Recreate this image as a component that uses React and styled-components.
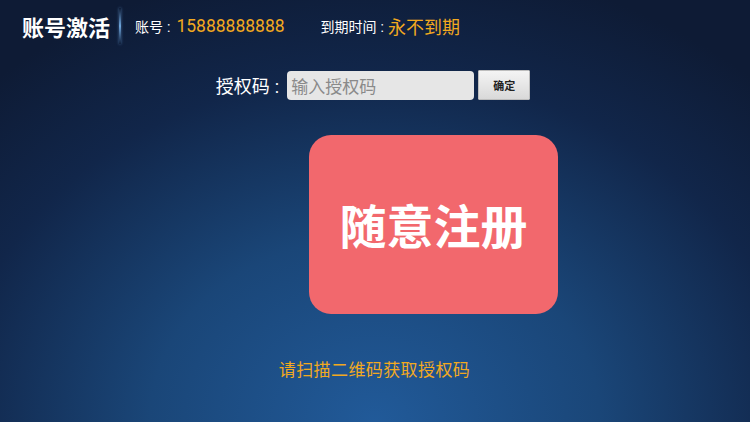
import styled, { createGlobalStyle } from "styled-components";

const GlobalStyle = createGlobalStyle`
  html, body {
    margin: 0;
    padding: 0;
    height: 100%;
  }
  body {
    font-family: Roboto, "Noto Sans CJK SC", sans-serif;
  }
  #root {
    height: 100%;
  }
`;

const ORANGE = "#f2a91f";

const Page = styled.div`
  width: 750px;
  height: 422px;
  overflow: hidden;
  display: flex;
  flex-direction: column;
  background: radial-gradient(
    ellipse 75% 110% at 50% 100%,
    #215a99 0%,
    #1a4678 40%,
    #11264a 75%,
    #0e1b35 100%
  );
  color: #fff;
`;

const Header = styled.div`
  height: 52px;
  display: flex;
  align-items: center;
  padding-left: 22px;
`;

const Title = styled.div`
  font-size: 22px;
  font-weight: 700;
`;

const Divider = styled.div`
  width: 2px;
  height: 36px;
  margin: 0 14px 0 9px;
  background: linear-gradient(
    to bottom,
    rgba(90, 150, 210, 0) 0%,
    #6fa6dc 50%,
    rgba(90, 150, 210, 0) 100%
  );
  box-shadow: 0 0 3px rgba(110, 170, 230, 0.6);
`;

const InfoItem = styled.div`
  display: flex;
  align-items: center;
  margin-right: ${(p) => p.$gap || 0}px;
`;

const InfoLabel = styled.span`
  font-size: 14px;
  color: #fff;
`;

const Colon = styled.span`
  margin: 0 ${(p) => p.$space || 6}px 0 ${(p) => p.$space || 4}px;
`;

const InfoValue = styled.span`
  font-size: ${(p) => p.$size || 16}px;
  color: ${ORANGE};
`;

const AuthRow = styled.div`
  margin-top: 18px;
  display: flex;
  align-items: center;
  justify-content: center;
  padding-right: 4px;
`;

const AuthLabel = styled.label`
  font-size: 18px;
  color: #fff;
  margin-right: 3px;
`;

const CodeInput = styled.input`
  width: 187px;
  height: 29px;
  box-sizing: border-box;
  border: none;
  border-radius: 4px;
  background: #e6e6e6;
  padding: 0 4px;
  font-family: "Noto Sans CJK SC", sans-serif;
  font-size: 17px;
  color: #333;
  outline: none;
  &::placeholder {
    color: #8a8a8a;
  }
`;

const ConfirmButton = styled.button`
  margin-left: 4px;
  width: 52px;
  height: 30px;
  border: 1px solid #bdbdbd;
  border-radius: 1px;
  background: linear-gradient(to bottom, #f4f4f4, #d9d9d9);
  font-family: "Noto Sans CJK SC", sans-serif;
  font-size: 11px;
  font-weight: 700;
  color: #222;
  padding: 0;
`;

const Stage = styled.div`
  display: flex;
  padding-left: 309px;
  margin-top: 35px;
`;

const RegisterCard = styled.button`
  width: 249px;
  height: 179px;
  border: none;
  border-radius: 22px;
  background: #f2686d;
  color: #fff;
  font-family: "Noto Sans CJK SC", sans-serif;
  font-size: 47px;
  font-weight: 700;
  display: flex;
  align-items: center;
  justify-content: center;
  padding: 0 0 2px;
  cursor: pointer;
`;

const Hint = styled.div`
  margin-top: 42px;
  text-align: center;
  font-size: 17px;
  letter-spacing: 0.4px;
  color: ${ORANGE};
  padding-right: 1px;
`;

const App = () => {
  return (
    <>
      <GlobalStyle />
      <Page>
        <Header>
          <Title>账号激活</Title>
          <Divider />
          <InfoItem $gap={36}>
            <InfoLabel>
              账号<Colon>:</Colon>
            </InfoLabel>
            <InfoValue $size={17.5}>15888888888</InfoValue>
          </InfoItem>
          <InfoItem>
            <InfoLabel>
              到期时间<Colon $space={4}>:</Colon>
            </InfoLabel>
            <InfoValue $size={18}>永不到期</InfoValue>
          </InfoItem>
        </Header>
        <AuthRow>
          <AuthLabel>
            授权码<Colon $space={5}>:</Colon>
          </AuthLabel>
          <CodeInput placeholder="输入授权码" />
          <ConfirmButton>确定</ConfirmButton>
        </AuthRow>
        <Stage>
          <RegisterCard>随意注册</RegisterCard>
        </Stage>
        <Hint>请扫描二维码获取授权码</Hint>
      </Page>
    </>
  );
};

export default App;
